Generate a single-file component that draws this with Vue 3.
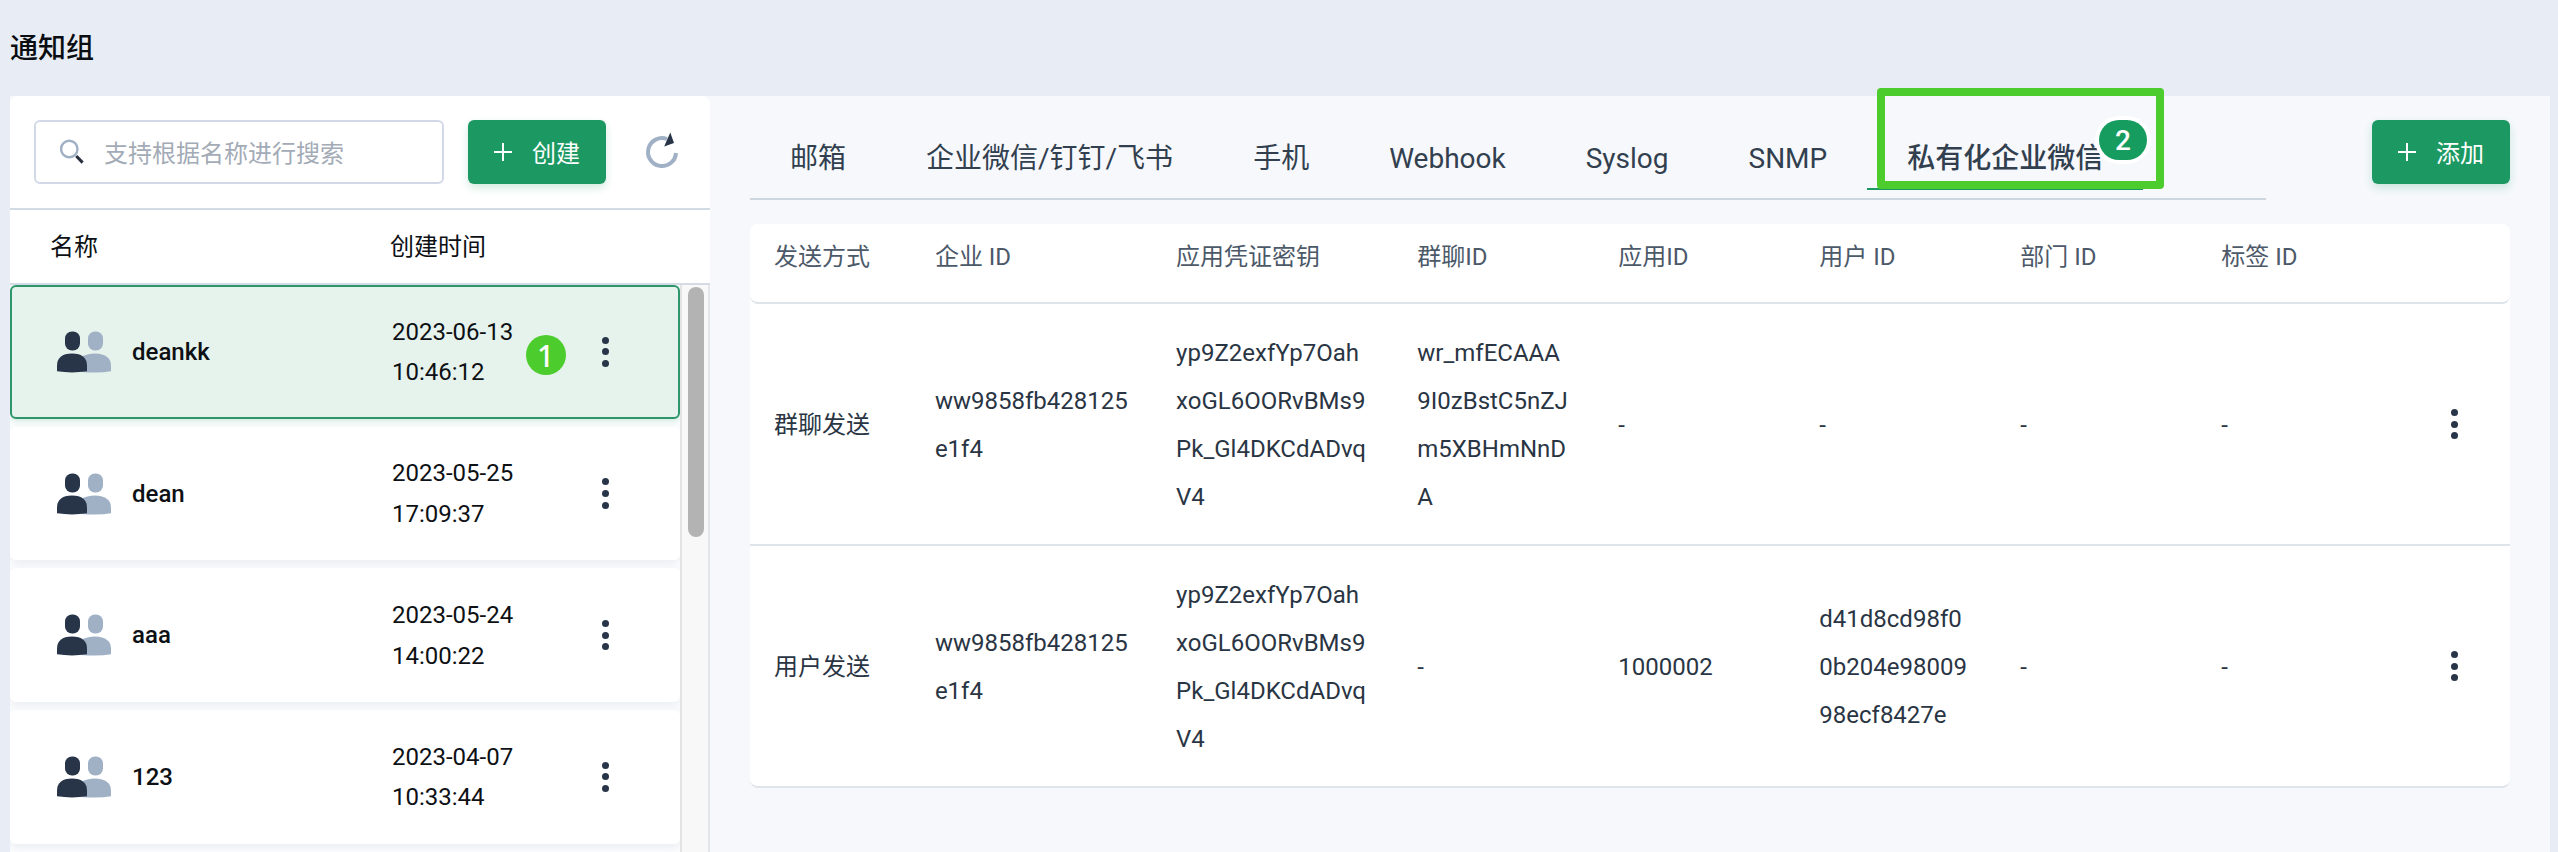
<script setup>
const groups = [
  { name: 'deankk', date: '2023-06-13', time: '10:46:12', active: true },
  { name: 'dean', date: '2023-05-25', time: '17:09:37' },
  { name: 'aaa', date: '2023-05-24', time: '14:00:22' },
  { name: '123', date: '2023-04-07', time: '10:33:44' },
]
const tabs = ['邮箱', '企业微信/钉钉/飞书', '手机', 'Webhook', 'Syslog', 'SNMP', '私有化企业微信']
const columns = ['发送方式', '企业 ID', '应用凭证密钥', '群聊ID', '应用ID', '用户 ID', '部门 ID', '标签 ID']
const secret = ['yp9Z2exfYp7Oah', 'xoGL6OORvBMs9', 'Pk_Gl4DKCdADvq', 'V4']
const corp = ['ww9858fb428125', 'e1f4']
const rows = [
  [['群聊发送'], corp, secret, ['wr_mfECAAA', '9I0zBstC5nZJ', 'm5XBHmNnD', 'A'], ['-'], ['-'], ['-'], ['-']],
  [['用户发送'], corp, secret, ['-'], ['1000002'], ['d41d8cd98f0', '0b204e98009', '98ecf8427e'], ['-'], ['-']],
]
</script>

<template>
  <div class="page">
    <h1 class="title">通知组</h1>
    <div class="body">
      <aside class="side">
        <div class="toolbar">
          <div class="search">
            <svg class="search-icon" width="26" height="26" viewBox="0 0 26 26">
              <circle cx="9.300" cy="10" r="8.200" fill="none" stroke="#a0b1c6" stroke-width="2.400" />
              <path d="M16.300 17L22.600 23.600" stroke="#252f3d" stroke-width="3" />
            </svg>
            <span>支持根据名称进行搜索</span>
          </div>
          <button class="btn">
            <svg width="20" height="20" viewBox="0 0 20 20"><path d="M10 1v18M1 10h18" stroke="#fff" stroke-width="2" /></svg>
            <span>创建</span>
          </button>
          <svg class="refresh" width="36" height="38" viewBox="0 0 36 38">
            <path d="M23 7A14 14 0 1 0 32 21" fill="none" stroke="#a0b1c6" stroke-width="4" />
            <path d="M26.300 .5L30 11L20.200 14.500Z" fill="#283548" />
          </svg>
        </div>
        <div class="side-head"><span>名称</span><span>创建时间</span></div>
        <div class="side-main">
          <div class="list">
            <div v-for="g in groups" :key="g.name" class="item" :class="{ active: g.active }">
              <svg class="people" width="56" height="44" viewBox="0 0 56 44">
                <rect x="31" y="1.500" width="15" height="19" rx="7" fill="#a0b1c6" />
                <path d="M24 27Q30 23.500 38 23.500Q54 24 54 36V41.300Q42 43.500 24 42Z" fill="#a0b1c6" />
                <rect x="8" y="1.500" width="15" height="19" rx="7" fill="#283548" />
                <path d="M0 41.300V36Q0 23.500 15 23.500Q30 23.500 30 36V41.300Q15 43.500 0 41.300Z" fill="#283548" />
              </svg>
              <span class="name">{{ g.name }}</span>
              <span class="when">{{ g.date }}<br />{{ g.time }}</span>
              <span v-if="g.active" class="step">1</span>
              <span class="dots"><i /><i /><i /></span>
            </div>
          </div>
          <div class="track"><div class="thumb" /></div>
        </div>
      </aside>

      <main class="main">
        <div class="tab-row">
          <nav class="tabs">
            <span v-for="(t, i) in tabs" :key="t" class="tab" :class="{ on: i === 6 }">
              {{ t }}
              <template v-if="i === 6"><b class="frame" /><b class="count">2</b></template>
            </span>
          </nav>
          <button class="btn">
            <svg width="20" height="20" viewBox="0 0 20 20"><path d="M10 1v18M1 10h18" stroke="#fff" stroke-width="2" /></svg>
            <span>添加</span>
          </button>
        </div>
        <div class="table">
          <div class="tr th"><span v-for="c in columns" :key="c" class="td">{{ c }}</span></div>
          <div v-for="(r, i) in rows" :key="i" class="tr">
            <div v-for="(cell, j) in r" :key="j" class="td cell"><div v-for="l in cell" :key="l">{{ l }}</div></div>
            <div class="more"><span class="dots"><i /><i /><i /></span></div>
          </div>
        </div>
      </main>
    </div>
  </div>
</template>

<style>
html, body { margin: 0; overflow: hidden; }
</style>

<style scoped>
.page {
  width: 2558px; height: 852px; overflow: hidden; box-sizing: border-box;
  background: #e8edf5; display: flex; flex-direction: column;
  font-family: Roboto, "Noto Sans CJK SC", sans-serif; font-size: 24px; color: #0d1014;
  white-space: nowrap;
}
.page * { box-sizing: border-box; }
.title { margin: 0; height: 96px; padding-left: 10px; font-size: 28px; line-height: 98px; font-weight: 500; color: #0a0d12; flex: none; }
.body { display: flex; flex: 1; width: 2540px; margin-left: 10px; background: #f6f8fc; min-height: 0; }
.side { width: 700px; flex: none; display: flex; flex-direction: column; }
.toolbar { height: 114px; flex: none; display: flex; padding: 24px 24px 0; background: #fff; border-radius: 8px 8px 0 0; border-bottom: 2px solid #d2dae5; }
.search { width: 410px; height: 64px; border: 2px solid #d2d8e8; border-radius: 6px; display: flex; align-items: center; color: #a3abb6; }
.search span { padding-bottom: 2px; }
.search-icon { margin: 0 18px 0 24px; }
.btn { width: 138px; height: 64px; padding: 0 0 0 25px; border: 0; border-radius: 6px; background: #1c9962; color: #fff; display: flex; align-items: center; font: inherit; box-shadow: 0 4px 8px rgba(28, 153, 98, .2); }
.btn span { margin-left: 19px; padding-bottom: 2px; }
.search + .btn { margin-left: 24px; }
.refresh { margin: 12px 0 0 38px; }
.side-head { height: 75px; flex: none; background: #fff; border-bottom: 2px solid #d5dbe4; line-height: 75px; display: flex; padding-left: 40px; }
.side-head span:first-child { width: 340px; }
.side-main { flex: 1; display: flex; min-height: 0; }
.list { width: 670px; display: flex; flex-direction: column; gap: 8px; overflow: hidden; background: #fcfdfe; }
.item { height: 133.7px; flex: none; position: relative; display: flex; align-items: center; padding-left: 47px; background: #fff; border-radius: 6px; box-shadow: 0 4px 10px rgba(60, 80, 120, .09); }
.item.active { background: #e6f3ec; border: 2px solid #2d976b; padding-left: 45px; box-shadow: 0 2px 6px rgba(28, 153, 98, .2); }
.people { flex: none; }
.name { flex: none; margin-left: 19px; width: 260px; font-weight: 500; }
.when { flex: none; width: 210.300px; line-height: 40.8px; padding-top: 1px; }
.dots { flex: none; display: flex; flex-direction: column; align-items: center; gap: 4.700px; width: 7px; }
.dots i { width: 7px; height: 7px; border-radius: 50%; background: #283548; }
.step { position: absolute; left: 513.500px; top: 47.500px; width: 40px; height: 40px; border-radius: 50%; background: #4ccc2d; color: #fff; font: 500 30px/42px "Noto Sans", sans-serif; text-align: center; }
.track { width: 30px; border-left: 2px solid #e2e3e5; border-right: 2px solid #e3e5ea; background: #f8f8f9; padding: 2px 0 0 6px; }
.thumb { width: 16px; height: 250px; border-radius: 8px; background: #b3b3b3; }
.main { width: 1800px; padding: 24px 0 0 40px; }
.tab-row { height: 104px; display: flex; justify-content: space-between; }
.tabs { width: 1516px; height: 80px; border-bottom: 2px solid #cdd5df; display: flex; font-size: 28px; color: #323f4f; }
.tab { position: relative; height: 70px; line-height: 78px; padding: 0 40px; }
.tab.on { font-weight: 500; border-bottom: 2px solid #1c9962; flex: none; width: 276px; }
.frame { position: absolute; left: 10px; top: -32.500px; width: 287px; height: 101px; border: 8px solid #4ccc2d; border-radius: 4px; }
.count { position: absolute; left: 231.500px; top: 0; width: 48.500px; height: 40px; border-radius: 20px; background: #179c5f; box-shadow: 0 0 0 4px #fff; color: #fff; text-align: center; font: 500 28px/41px Roboto, sans-serif; }
.table { width: 1760px; background: #fff; border-radius: 8px; }
.tr { display: grid; grid-template-columns: 160.9px 241.2px 241.2px 201px 201px 201px 201px 201px 1fr; align-items: center; height: 242px; background: #fff; border-bottom: 2px solid #dde4ea; color: #2a3544; line-height: 48px; }
.td { padding-left: 24px; }
.cell { padding-top: 1px; margin-bottom: -1px; }
.th { height: 80px; border-radius: 8px; color: #4c5969; padding-bottom: 13px; }
.tr:last-child { border-radius: 0 0 8px 8px; }
.more { display: flex; justify-content: flex-end; padding-right: 52.500px; }
</style>
